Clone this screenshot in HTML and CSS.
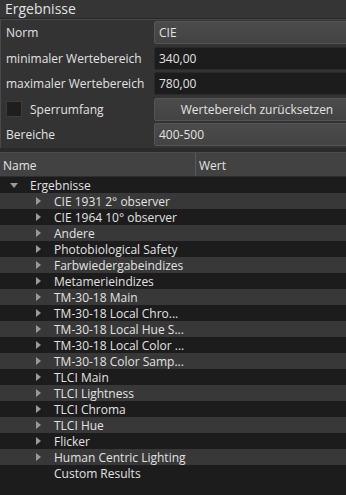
FILE: index.html
```html
<!DOCTYPE html>
<html>
<head>
<meta charset="utf-8">
<link rel="stylesheet" href="styles.css">
</head>
<body>
<div class="title">Ergebnisse</div>
<div class="panel">
  <div class="form">
    <div class="label">Norm</div><div class="combo">CIE</div>
    <div class="label">minimaler Wertebereich</div><div class="input">340,00</div>
    <div class="label">maximaler Wertebereich</div><div class="input">780,00</div>
    <div class="label check"><span class="box"></span>Sperrumfang</div><div class="button">Wertebereich zurücksetzen</div>
    <div class="label">Bereiche</div><div class="combo">400-500</div>
  </div>
</div>
<div class="tree">
  <div class="header"><div class="col name">Name</div><div class="col wert">Wert</div></div>
  <div class="rows">
    <div class="row dark top"><span class="arrow down"></span>Ergebnisse</div>
    <div class="row light child"><span class="arrow"></span>CIE 1931 2° observer</div>
    <div class="row dark child"><span class="arrow"></span>CIE 1964 10° observer</div>
    <div class="row light child"><span class="arrow"></span>Andere</div>
    <div class="row dark child"><span class="arrow"></span>Photobiological Safety</div>
    <div class="row light child"><span class="arrow"></span>Farbwiedergabeindizes</div>
    <div class="row dark child"><span class="arrow"></span>Metamerieindizes</div>
    <div class="row light child"><span class="arrow"></span>TM-30-18 Main</div>
    <div class="row dark child"><span class="arrow"></span>TM-30-18 Local Chro...</div>
    <div class="row light child"><span class="arrow"></span>TM-30-18 Local Hue S...</div>
    <div class="row dark child"><span class="arrow"></span>TM-30-18 Local Color ...</div>
    <div class="row light child"><span class="arrow"></span>TM-30-18 Color Samp...</div>
    <div class="row dark child"><span class="arrow"></span>TLCI Main</div>
    <div class="row light child"><span class="arrow"></span>TLCI Lightness</div>
    <div class="row dark child"><span class="arrow"></span>TLCI Chroma</div>
    <div class="row light child"><span class="arrow"></span>TLCI Hue</div>
    <div class="row dark child"><span class="arrow"></span>Flicker</div>
    <div class="row light child"><span class="arrow"></span>Human Centric Lighting</div>
    <div class="row dark child"><span class="noarrow"></span>Custom Results</div>
  </div>
</div>
</body>
</html>
```

FILE: styles.css
```css
html, body {
  margin: 0;
  padding: 0;
  background: #1c1c1c;
  overflow: hidden;
  width: 346px;
  height: 495px;
}
body {
  font-family: "Open Sans", "Noto Sans", sans-serif;
  font-size: 12px;
  color: #e2e2e2;
}
.title {
  height: 18px;
  line-height: 18px;
  padding-left: 5px;
  font-size: 14px;
  background: #353535;
  border-bottom: 1px solid #262626;
}
.panel {
  background: #333333;
  border-top: 1px solid #4a4a4a;
  border-left: 1px solid #4a4a4a;
  padding: 1px 0 3px 0;
  height: 124px;
  box-sizing: content-box;
}
.form {
  display: grid;
  grid-template-columns: 153px 206px;
  row-gap: 2.5px;
}
.label {
  height: 23px;
  line-height: 23px;
  padding-left: 5px;
}
.check {
  display: flex;
  align-items: center;
  gap: 8px;
}
.box {
  width: 16px;
  height: 16px;
  background: #1e1e1e;
  border: 1px solid #3c3c3c;
  box-sizing: border-box;
}
.combo, .button, .input {
  height: 23px;
  line-height: 21px;
  box-sizing: border-box;
  border-radius: 2px;
  padding-left: 4px;
}
.combo, .button {
  background: linear-gradient(#4b4b4b, #434343);
  border: 1px solid #555555;
}
.button {
  text-align: center;
  padding-left: 0;
}
.input {
  background: #1c1c1c;
  border: 1px solid #2a2a2a;
}
.tree {
  background: #1c1c1c;
  border-top: 4px solid #2a2a2a;
}
.header {
  display: flex;
  height: 23px;
  line-height: 25px;
  background: #424242;
  border-top: 1px solid #4c4c4c;
  border-bottom: 1px solid #2e2e2e;
}
.col {
  padding-left: 3px;
}
.name {
  width: 192px;
  border-right: 1px solid #5a5a5a;
}
.wert {
  padding-left: 3px;
}
.row {
  height: 16px;
  line-height: 17px;
  display: flex;
  align-items: center;
  white-space: nowrap;
}
.dark { background: #1c1c1c; }
.light { background: #383838; }
.top { padding-left: 10px; }
.child { padding-left: 36px; }
.arrow {
  width: 0;
  height: 0;
  border-top: 4px solid transparent;
  border-bottom: 4px solid transparent;
  border-left: 5px solid #9a9a9a;
  margin-right: 13px;
}
.arrow.down {
  border-left: 4px solid transparent;
  border-right: 4px solid transparent;
  border-top: 5px solid #9a9a9a;
  border-bottom: 0;
  margin-right: 12px;
}
.noarrow {
  width: 5px;
  margin-right: 13px;
}
```
